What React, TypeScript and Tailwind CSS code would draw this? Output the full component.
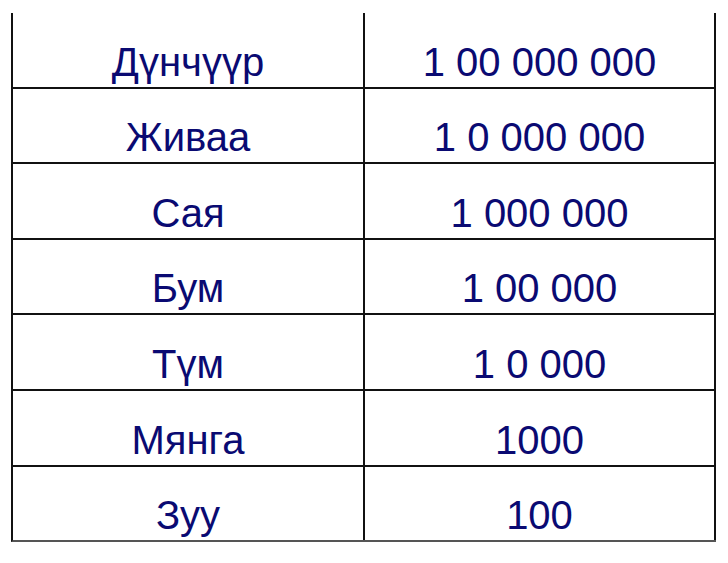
import React from "react";

const rows: [string, string][] = [
  ["Дүнчүүр", "1 00 000 000"],
  ["Живаа", "1 0 000 000"],
  ["Сая", "1 000 000"],
  ["Бум", "1 00 000"],
  ["Түм", "1 0 000"],
  ["Мянга", "1000"],
  ["Зуу", "100"],
];

export default function App() {
  return (
    <div className="w-[728px] h-[563px] bg-white pt-[13px] font-['Liberation_Sans',Arial,sans-serif]">
      <div className="ml-[11px] w-[705px]">
        {rows.map(([name, value], i) => (
          <div
            key={name}
            className={`flex h-[75.6px] border-l-2 border-b-2 border-[#111] ${
              i === rows.length - 1 ? "border-b-[#555]" : ""
            }`}
          >
            <div className="w-[352px] border-r-2 border-[#111] flex items-end justify-center pb-[5px]">
              <span className="text-[40px] leading-none text-[#0a0a72]">{name}</span>
            </div>
            <div className="w-[351px] border-r-2 border-[#111] flex items-end justify-center pb-[5px]">
              <span className="text-[40px] leading-none text-[#0a0a72]">{value}</span>
            </div>
          </div>
        ))}
      </div>
    </div>
  );
}
